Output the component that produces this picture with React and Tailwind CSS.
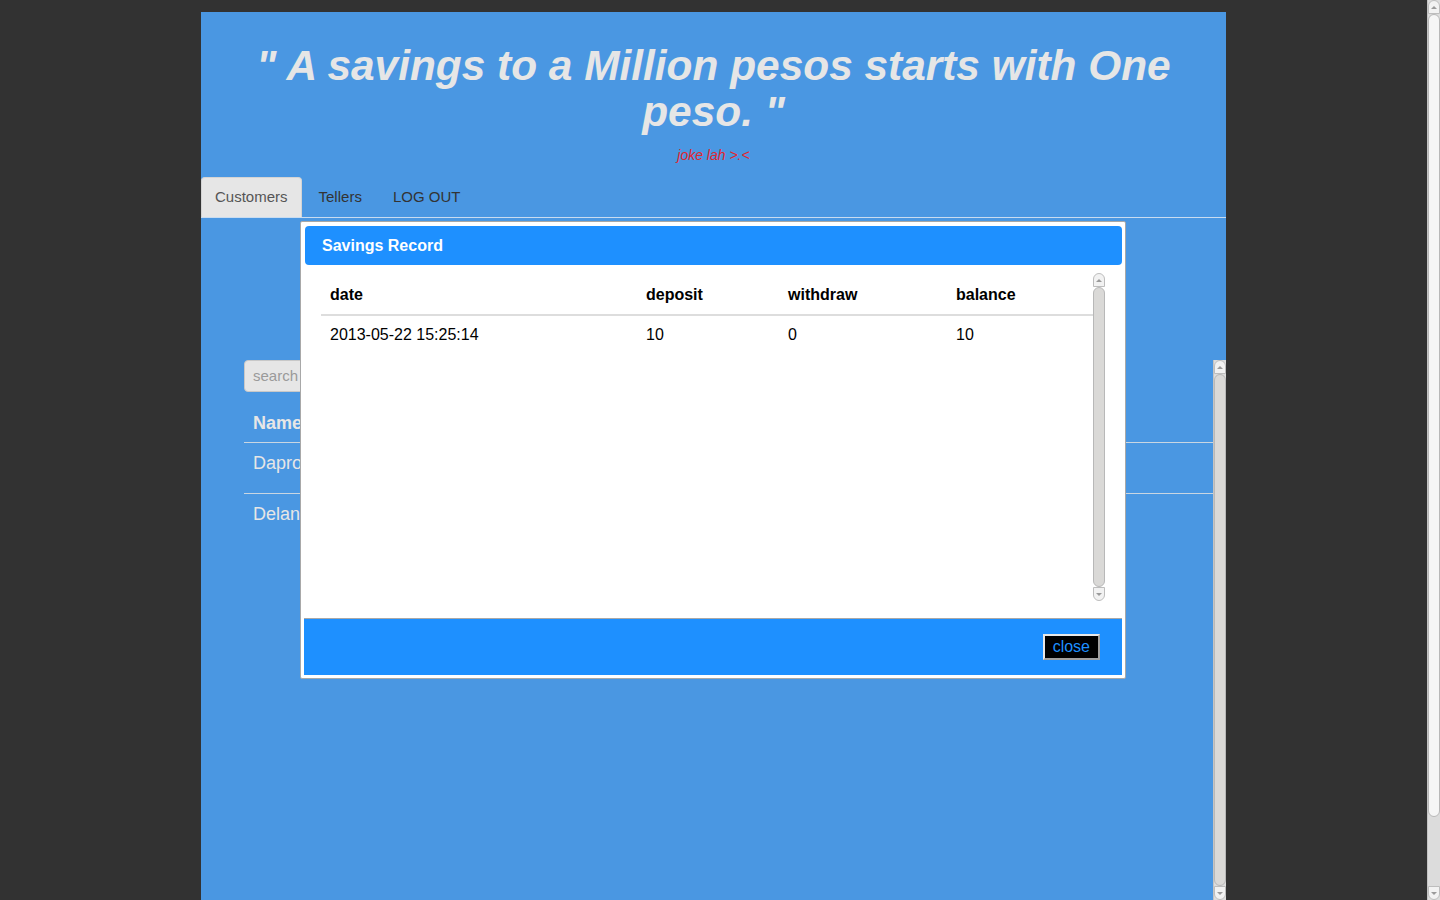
import { useState } from 'react';

const records = [
  { date: '2013-05-22 15:25:14', deposit: 10, withdraw: 0, balance: 10 },
];

const customers = ['Daproza', 'Delant'];

// fake browser scrollbar, thumb fills `thumb` and the rest is track
function Scrollbar({ thumb = 'flex-1', track = '', className = '' }) {
  return (
    <div className={`flex flex-col bg-[#dcdcdc] border-l border-[#c4c4c4] ${className}`}>
      <div className="h-[14px] shrink-0 rounded-t-[6px] bg-[#f2f2f2] border border-[#bdbdbd] flex items-center justify-center">
        <div className="w-0 h-0 border-l-[3px] border-r-[3px] border-b-[3px] border-l-transparent border-r-transparent border-b-[#9a9a9a]" />
      </div>
      <div className={`rounded-[6px] bg-[#dad9d7] border border-[#b8b8b8] ${thumb}`} />
      {track && <div className={track} />}
      <div className="h-[14px] shrink-0 rounded-b-[6px] bg-[#f2f2f2] border border-[#bdbdbd] flex items-center justify-center">
        <div className="w-0 h-0 border-l-[3px] border-r-[3px] border-t-[3px] border-l-transparent border-r-transparent border-t-[#9a9a9a]" />
      </div>
    </div>
  );
}

export default function App() {
  const [open, setOpen] = useState(true);
  const [query, setQuery] = useState('');

  return (
    <div className="relative flex h-[900px] w-[1440px] overflow-hidden bg-[#323232] font-['Liberation_Sans',Arial,sans-serif]">
      <div className="flex-1 pt-[12px]">
        <div className="mx-auto flex h-full w-[1025px] flex-col bg-[#4a97e2]">
          <h1 className="px-[20px] pt-[31px] text-center text-[42.4px] font-bold italic leading-[46px] text-[#e6e6e6]">
            " A savings to a Million pesos starts with One peso. "
          </h1>
          <p className="mt-[12px] text-center text-[14px] italic leading-[16px] text-[#e0262e]">
            joke lah &gt;.&lt;
          </p>

          <nav className="mt-[14px] flex h-[41px] border-b border-[#c9dcf0] text-[15px]">
            <a className="flex items-center rounded-t-[4px] border border-b-0 border-[#d4d4d4] bg-[#e6e6e6] px-[13px] text-[#555]">
              Customers
            </a>
            <a className="flex items-center pl-[17px] pr-[15px] text-[#333]">Tellers</a>
            <a className="flex items-center px-[16px] text-[#333]">LOG OUT</a>
          </nav>

          <div className="ml-[43px] mt-[142px] flex min-h-0 flex-1">
            <div className="flex-1">
              <input
                value={query}
                onChange={(e) => setQuery(e.target.value)}
                placeholder="search"
                className="h-[32px] w-[220px] rounded-[4px] border border-[#c8c8c8] bg-[#e6e6e6] px-[8px] pb-px text-[15px] text-[#555] placeholder-[#9a9a9a] outline-none"
              />
              <div className="mt-[10px] border-b border-[#c9d6e2] px-[9px] pb-[8px] pt-[11px] text-[18px] font-bold leading-[21px] text-[#e6e6e6]">
                Name
              </div>
              {customers.map((name, i) => (
                <div
                  key={name}
                  className={`h-[51px] px-[9px] pt-[10px] text-[18px] leading-[21px] text-[#e6e6e6] ${
                    i < customers.length - 1 ? 'border-b border-[#c9d6e2]' : ''
                  }`}
                >
                  {name}
                </div>
              ))}
            </div>
            <Scrollbar className="w-[13px]" thumb="flex-1" />
          </div>
        </div>
      </div>

      <Scrollbar
        className="w-[13px]"
        thumb="h-[803px] bg-[#f6f6f6]"
        track="flex-1"
      />

      {open && (
        <div className="absolute left-[300px] top-[221px] flex h-[458px] w-[826px] flex-col rounded-[2px] border border-[#a8a8a8] bg-white p-[3px]">
          <div className="ml-px mt-px flex h-[39px] shrink-0 items-center rounded-[4px] bg-[#1e90ff] pl-[17px] pt-px text-[16px] font-bold text-white">
            Savings Record
          </div>
          <div className="ml-[17px] mr-[17px] mt-[8px] flex h-[328px] shrink-0">
            <div className="flex-1">
              <div className="grid grid-cols-[316px_142px_168px_1fr] border-b-2 border-[#dddddd] text-[16px] font-bold leading-[20px] text-black">
                <div className="px-[9px] pb-[9px] pt-[12px]">date</div>
                <div className="px-[9px] pb-[9px] pt-[12px]">deposit</div>
                <div className="px-[9px] pb-[9px] pt-[12px]">withdraw</div>
                <div className="px-[9px] pb-[9px] pt-[12px]">balance</div>
              </div>
              {records.map((r) => (
                <div
                  key={r.date}
                  className="grid grid-cols-[316px_142px_168px_1fr] text-[16px] leading-[20px] text-black"
                >
                  <div className="px-[9px] pb-[7px] pt-[9px]">{r.date}</div>
                  <div className="px-[9px] pb-[7px] pt-[9px]">{r.deposit}</div>
                  <div className="px-[9px] pb-[7px] pt-[9px]">{r.withdraw}</div>
                  <div className="px-[9px] pb-[7px] pt-[9px]">{r.balance}</div>
                </div>
              ))}
            </div>
            <Scrollbar className="w-[12px] bg-white border-l-0" thumb="flex-1" />
          </div>
          <div className="mt-[17px] flex h-[57px] shrink-0 items-center justify-end border-t border-[#a8a8a8] bg-[#1e90ff] pr-[22px]">
            <button
              onClick={() => setOpen(false)}
              className="h-[26px] border-2 border-t-[#e8e8e8] border-l-[#e8e8e8] border-r-[#a0a0a0] border-b-[#a0a0a0] bg-black px-[8px] text-[16px] leading-[18px] text-[#1e90ff]"
            >
              close
            </button>
          </div>
        </div>
      )}
    </div>
  );
}
